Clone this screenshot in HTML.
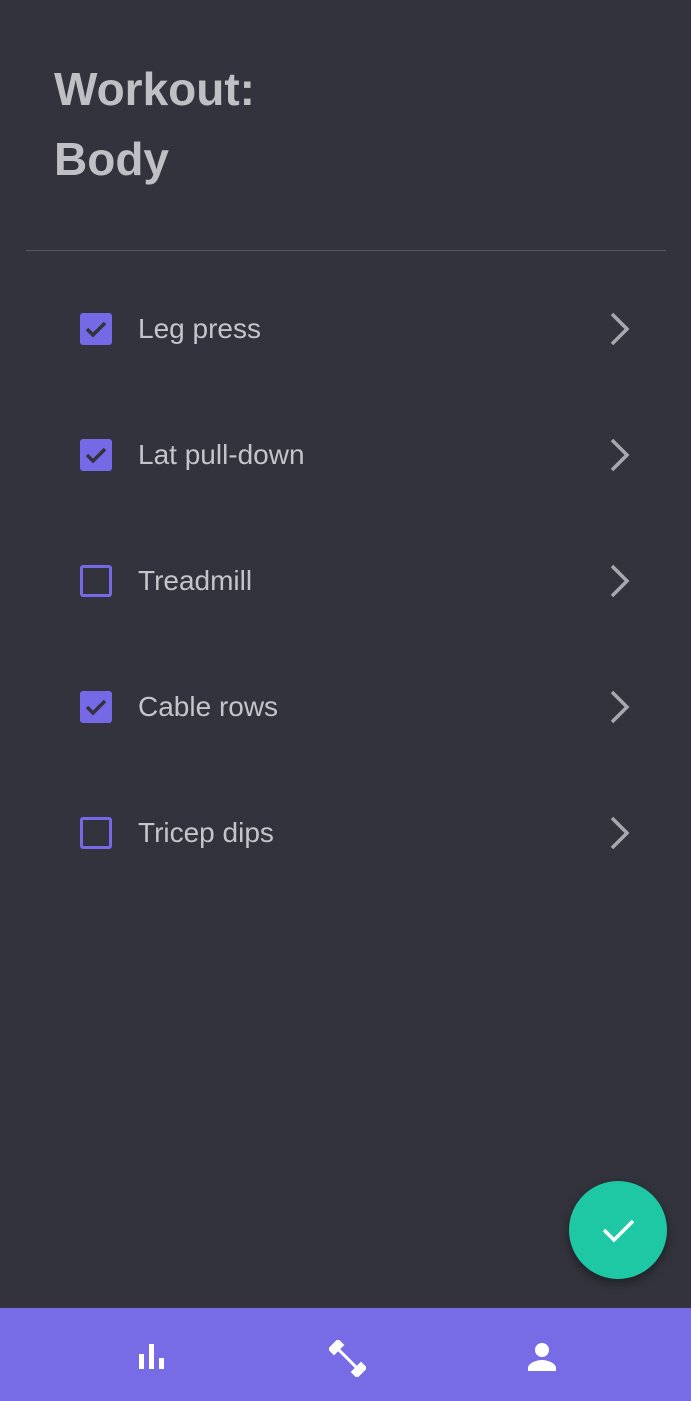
<!DOCTYPE html><html><head><style>
body{margin:0;width:691px;height:1401px;background:#33333d;font-family:"Liberation Sans",sans-serif;position:relative;overflow:hidden}
h1{position:absolute;left:54px;top:54px;margin:0;font-size:46px;line-height:70px;color:#bfbfc4;font-weight:bold}
.hr{position:absolute;left:26px;top:250px;width:640px;height:1px;background:#55555f}
.row{position:absolute;left:0;width:691px;height:40px}
.cb{position:absolute;left:80px;top:4px;width:32px;height:32px;border-radius:3px;box-sizing:border-box}
.on{background:#7669e5}
.off{border:3px solid #7669e5}
.t{position:absolute;left:138px;top:4px;font-size:28px;color:#c4c4ca}
.ch{position:absolute;left:604px;top:2px}
.fab{position:absolute;left:569px;top:1181px;width:98px;height:98px;border-radius:50%;background:#1ec8a5;box-shadow:0 4px 10px rgba(0,0,0,.4)}
.nav{position:absolute;left:0;top:1308px;width:691px;height:93px;background:#776be6}
</style></head><body>
<h1>Workout:<br>Body</h1>
<div class="hr"></div>
<div class="row" style="top:309px"><div class="cb on"><svg width="32" height="32"><path d="M7 16l6 6 12-12" stroke="#33333d" stroke-width="3.5" fill="none"/></svg></div><div class="t">Leg press</div><svg class="ch" width="30" height="36"><path d="M8 3l15 15-15 15" stroke="#a8a8ae" stroke-width="3.5" fill="none"/></svg></div>
<div class="row" style="top:435px"><div class="cb on"><svg width="32" height="32"><path d="M7 16l6 6 12-12" stroke="#33333d" stroke-width="3.5" fill="none"/></svg></div><div class="t">Lat pull-down</div><svg class="ch" width="30" height="36"><path d="M8 3l15 15-15 15" stroke="#a8a8ae" stroke-width="3.5" fill="none"/></svg></div>
<div class="row" style="top:561px"><div class="cb off"></div><div class="t">Treadmill</div><svg class="ch" width="30" height="36"><path d="M8 3l15 15-15 15" stroke="#a8a8ae" stroke-width="3.5" fill="none"/></svg></div>
<div class="row" style="top:687px"><div class="cb on"><svg width="32" height="32"><path d="M7 16l6 6 12-12" stroke="#33333d" stroke-width="3.5" fill="none"/></svg></div><div class="t">Cable rows</div><svg class="ch" width="30" height="36"><path d="M8 3l15 15-15 15" stroke="#a8a8ae" stroke-width="3.5" fill="none"/></svg></div>
<div class="row" style="top:813px"><div class="cb off"></div><div class="t">Tricep dips</div><svg class="ch" width="30" height="36"><path d="M8 3l15 15-15 15" stroke="#a8a8ae" stroke-width="3.5" fill="none"/></svg></div>
<div class="fab"><svg width="98" height="98"><path d="M35 49l10 10 19-19" stroke="#fff" stroke-width="3.5" fill="none"/></svg></div>
<div class="nav">
<svg style="position:absolute;left:139px;top:36px" width="27" height="26" fill="#fff"><rect x="0" y="10" width="5" height="15"/><rect x="10" y="0" width="5" height="25"/><rect x="20" y="14" width="5" height="11"/></svg>
<svg style="position:absolute;left:329px;top:32px" width="37" height="37" fill="none" stroke="#fff" stroke-linecap="square"><path d="M10 10l17 17" stroke-width="3"/><path d="M5 9l4-4" stroke-width="9"/><path d="M2 8l6-6" stroke-width="3"/><path d="M28 32l4-4" stroke-width="9"/><path d="M29 35l6-6" stroke-width="3"/></svg>
<svg style="position:absolute;left:527px;top:34px" width="30" height="30" fill="#fff"><circle cx="15" cy="8" r="7"/><path d="M1 29v-3c0-5 9-8 14-8s14 3 14 8v3z"/></svg>
</div>
</body></html>
